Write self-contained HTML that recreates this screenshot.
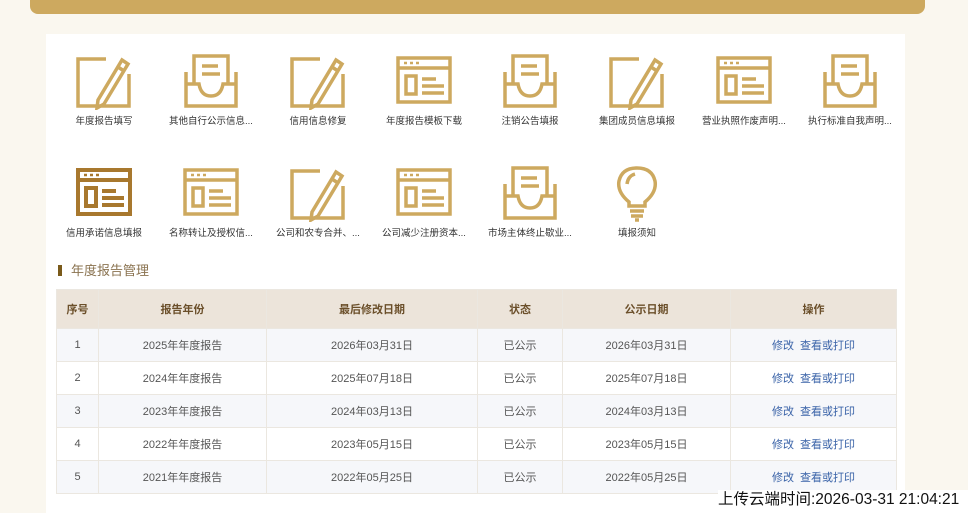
<!DOCTYPE html>
<html><head><meta charset="utf-8"><style>
*{margin:0;padding:0;box-sizing:border-box}
body{width:968px;height:513px;overflow:hidden;background:#faf7ef;font-family:"Liberation Sans","Noto Sans CJK SC",sans-serif;position:relative}
.bar{position:absolute;left:30px;top:-10px;width:895px;height:24px;background:#cda95f;border-radius:0 0 8px 8px}
.panel{position:absolute;left:46px;top:34px;width:859px;height:479px;background:#fff}
.ic{position:absolute;width:100px;text-align:center;font-size:9.5px;color:#333;white-space:nowrap}
.ic svg{display:block;margin:0 auto 3px}
.h{position:absolute;left:12px;top:226px;font-size:13px;color:#8a7350}
.h:before{content:"";display:inline-block;width:4px;height:11px;background:#7a5a1a;margin-right:9px;vertical-align:-1px}
table{position:absolute;left:10px;top:255px;width:841px;border-collapse:collapse;font-size:11px;color:#555}
td,th{border:1px solid #ebe7e0;text-align:center;height:33px}
th{background:#ece4da;height:39px;color:#6b4f2a;font-weight:bold}
tr:nth-child(even) td{background:#f6f7fa}
a{color:#3a63a8;text-decoration:none;margin:0 3px}
.ft{position:absolute;left:718px;top:490px;font-size:15.5px;color:#111;background:#fff;padding:0 6px 0 0;height:23px;line-height:19px;width:250px}
</style></head><body>
<div class="bar"></div>
<svg width="0" height="0" style="position:absolute">
<defs>
<g id="pen" fill="none" stroke="#cda95f" stroke-width="3.5">
<path d="M32 7H4V54H55V22"/><path d="M24 48L48 8l6 4-24 40-7 4z M44 15l6 4"/>
</g>
<g id="tray" fill="none" stroke="#cda95f" stroke-width="3.5">
<path d="M5 20V54H55V20"/><path d="M5 32H18Q20 44 30 44Q40 44 42 32H55"/><path d="M13 32V4H47V32"/><path d="M21 14H37M21 22H39"/>
</g>
<g id="win" fill="none" stroke="#cda95f" stroke-width="3.5">
<rect x="4" y="6" width="52" height="44"/><path d="M4 16H56"/><path d="M10 11h3M16 11h3M22 11h3" stroke-width="2.5"/><rect x="12" y="24" width="10" height="18"/><path d="M28 27H42M28 34H50M28 41H50"/>
</g>
<g id="winD" fill="none" stroke="#a8782e" stroke-width="4">
<rect x="4" y="6" width="52" height="44"/><path d="M4 16H56"/><path d="M10 11h3M16 11h3M22 11h3" stroke-width="2.5"/><rect x="12" y="24" width="10" height="18"/><path d="M28 27H42M28 34H50M28 41H50"/>
</g>
<g id="bulb" fill="none" stroke="#cda95f" stroke-width="3.5">
<path d="M22 38Q10 28 12 17Q15 4 30 4Q45 4 48 17Q50 28 38 38V42H22Z"/><path d="M20 20Q21 12 28 10"/><path d="M23 47H37M24 52H36M28 56H32"/>
</g>
</defs></svg>
<div class="panel">
<div class="ic" style="left:8px;top:18px"><svg width="60" height="58"><use href="#pen"/></svg>年度报告填写</div>
<div class="ic" style="left:115px;top:18px"><svg width="60" height="58"><use href="#tray"/></svg>其他自行公示信息...</div>
<div class="ic" style="left:222px;top:18px"><svg width="60" height="58"><use href="#pen"/></svg>信用信息修复</div>
<div class="ic" style="left:328px;top:18px"><svg width="60" height="58"><use href="#win"/></svg>年度报告模板下载</div>
<div class="ic" style="left:434px;top:18px"><svg width="60" height="58"><use href="#tray"/></svg>注销公告填报</div>
<div class="ic" style="left:541px;top:18px"><svg width="60" height="58"><use href="#pen"/></svg>集团成员信息填报</div>
<div class="ic" style="left:648px;top:18px"><svg width="60" height="58"><use href="#win"/></svg>营业执照作废声明...</div>
<div class="ic" style="left:754px;top:18px"><svg width="60" height="58"><use href="#tray"/></svg>执行标准自我声明...</div>
<div class="ic" style="left:8px;top:130px"><svg width="60" height="58"><use href="#winD"/></svg>信用承诺信息填报</div>
<div class="ic" style="left:115px;top:130px"><svg width="60" height="58"><use href="#win"/></svg>名称转让及授权信...</div>
<div class="ic" style="left:222px;top:130px"><svg width="60" height="58"><use href="#pen"/></svg>公司和农专合并、...</div>
<div class="ic" style="left:328px;top:130px"><svg width="60" height="58"><use href="#win"/></svg>公司减少注册资本...</div>
<div class="ic" style="left:434px;top:130px"><svg width="60" height="58"><use href="#tray"/></svg>市场主体终止歇业...</div>
<div class="ic" style="left:541px;top:130px"><svg width="60" height="58"><use href="#bulb"/></svg>填报须知</div>
<div class="h">年度报告管理</div>
<table>
<tr><th style="width:42px">序号</th><th style="width:168px">报告年份</th><th style="width:211px">最后修改日期</th><th style="width:85px">状态</th><th style="width:168px">公示日期</th><th>操作</th></tr>
<tr><td>1</td><td>2025年年度报告</td><td>2026年03月31日</td><td>已公示</td><td>2026年03月31日</td><td><a>修改</a><a>查看或打印</a></td></tr>
<tr><td>2</td><td>2024年年度报告</td><td>2025年07月18日</td><td>已公示</td><td>2025年07月18日</td><td><a>修改</a><a>查看或打印</a></td></tr>
<tr><td>3</td><td>2023年年度报告</td><td>2024年03月13日</td><td>已公示</td><td>2024年03月13日</td><td><a>修改</a><a>查看或打印</a></td></tr>
<tr><td>4</td><td>2022年年度报告</td><td>2023年05月15日</td><td>已公示</td><td>2023年05月15日</td><td><a>修改</a><a>查看或打印</a></td></tr>
<tr><td>5</td><td>2021年年度报告</td><td>2022年05月25日</td><td>已公示</td><td>2022年05月25日</td><td><a>修改</a><a>查看或打印</a></td></tr>
</table>
</div>
<div class="ft">上传云端时间:2026-03-31 21:04:21</div>
</body></html>
